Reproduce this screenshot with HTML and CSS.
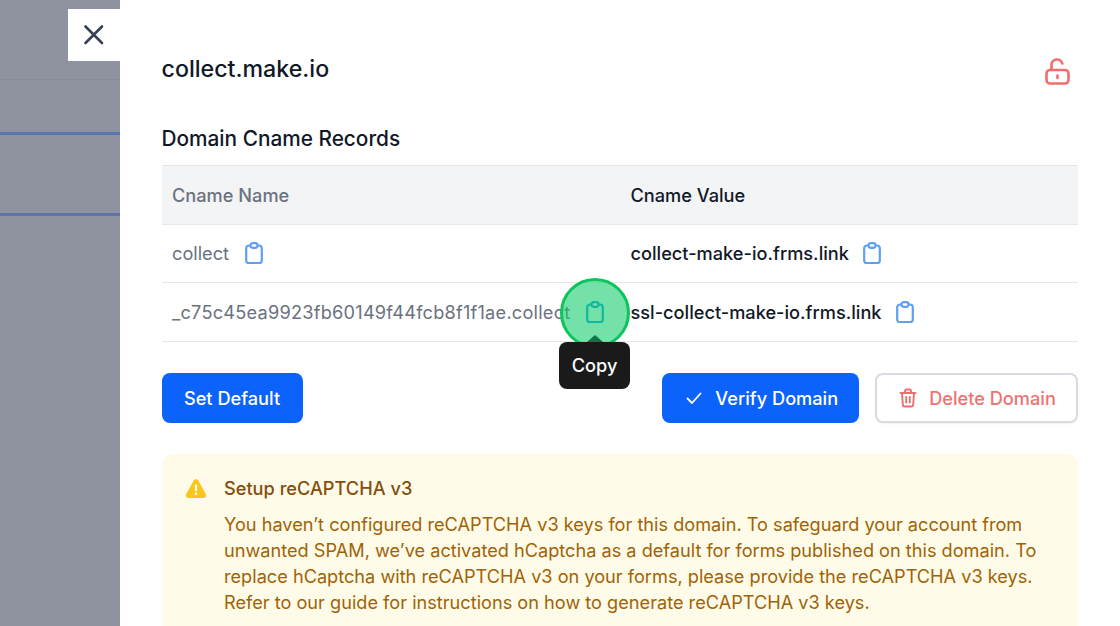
FILE: index.html
```html
<!DOCTYPE html>
<html lang="en">
<head>
<meta charset="utf-8">
<title>collect.make.io</title>
<link rel="stylesheet" href="styles.css">
</head>
<body>
<div class="app">
  <aside class="backdrop">
    <div class="line line-faint"></div>
    <div class="line line-a"></div>
    <div class="line line-b"></div>
    <button class="close" aria-label="Close">
      <svg width="26" height="26" viewBox="0 0 26 26" fill="none" stroke="#374151" stroke-width="2.6" stroke-linecap="round"><path d="M4.5 4.5 21 21M21 4.5 4.5 21"/></svg>
    </button>
  </aside>
  <main class="panel">
    <header class="head">
      <h1 class="title">collect.make.io</h1>
      <svg class="lock" width="25" height="27" viewBox="0 0 25 27" fill="none" stroke="#f26d6d" stroke-width="2.600" stroke-linecap="round" stroke-linejoin="round"><rect x="1.500" y="12" width="22" height="13.500" rx="3.500"/><path d="M6.500 12V7a5.500 5.500 0 0 1 10.800-1.500"/><path d="M12.500 17.500v2.500"/></svg>
    </header>
    <h2 class="subtitle">Domain Cname Records</h2>
    <div class="table">
      <div class="row row-head">
        <div class="cell cell-name muted">Cname Name</div>
        <div class="cell cell-value">Cname Value</div>
      </div>
      <div class="row">
        <div class="cell cell-name muted">collect
          <svg class="clip" viewBox="0 0 18 22" fill="none" stroke="#5ea1f2" stroke-width="2.200" stroke-linejoin="round"><path d="M5.500 3.500H4A2.800 2.800 0 0 0 1.200 6.300v12.500A2.200 2.200 0 0 0 3.400 21h11.200a2.200 2.200 0 0 0 2.200-2.200V6.300A2.800 2.800 0 0 0 14 3.500h-1.500"/><rect x="5.500" y="1.200" width="7" height="4.600" rx="2.200"/></svg>
        </div>
        <div class="cell cell-value">collect-make-io.frms.link
          <svg class="clip" viewBox="0 0 18 22" fill="none" stroke="#5ea1f2" stroke-width="2.200" stroke-linejoin="round"><path d="M5.500 3.500H4A2.800 2.800 0 0 0 1.200 6.300v12.500A2.200 2.200 0 0 0 3.400 21h11.200a2.200 2.200 0 0 0 2.200-2.200V6.300A2.800 2.800 0 0 0 14 3.500h-1.500"/><rect x="5.500" y="1.200" width="7" height="4.600" rx="2.200"/></svg>
        </div>
      </div>
      <div class="row">
        <div class="cell cell-name muted"><span class="token">_c75c45ea9923fb60149f44fcb8f1f1ae.collect</span>
          <svg class="clip clip-hot" viewBox="0 0 18 22" fill="none" stroke="#5ea1f2" stroke-width="2.200" stroke-linejoin="round"><path d="M5.500 3.500H4A2.800 2.800 0 0 0 1.200 6.300v12.500A2.200 2.200 0 0 0 3.400 21h11.200a2.200 2.200 0 0 0 2.200-2.200V6.300A2.800 2.800 0 0 0 14 3.500h-1.500"/><rect x="5.500" y="1.200" width="7" height="4.600" rx="2.200"/></svg>
        </div>
        <div class="cell cell-value">ssl-collect-make-io.frms.link
          <svg class="clip" viewBox="0 0 18 22" fill="none" stroke="#5ea1f2" stroke-width="2.200" stroke-linejoin="round"><path d="M5.500 3.500H4A2.800 2.800 0 0 0 1.200 6.300v12.500A2.200 2.200 0 0 0 3.400 21h11.200a2.200 2.200 0 0 0 2.200-2.200V6.300A2.800 2.800 0 0 0 14 3.500h-1.500"/><rect x="5.500" y="1.200" width="7" height="4.600" rx="2.200"/></svg>
        </div>
      </div>
    </div>
    <div class="actions">
      <button class="btn btn-primary btn-default">Set Default</button>
      <div class="actions-right">
        <button class="btn btn-primary btn-verify">
          <svg width="18" height="18" viewBox="0 0 18 18" fill="none" stroke="#fff" stroke-width="1.800" stroke-linecap="round" stroke-linejoin="round"><path d="M2.500 9.500 7 14 15.500 4.500"/></svg>
          Verify Domain
        </button>
        <button class="btn btn-outline">
          <svg width="18" height="20" viewBox="0 0 18 20" fill="none" stroke="#ee6f6f" stroke-width="1.900" stroke-linecap="round" stroke-linejoin="round"><path d="M1.500 5h15M6 5V3a1.500 1.500 0 0 1 1.500-1.500h3A1.500 1.500 0 0 1 12 3v2M3 5l.800 11.500A2 2 0 0 0 5.800 18.500h6.400a2 2 0 0 0 2-2L15 5M7.200 9v5.500M10.800 9v5.500"/></svg>
          Delete Domain
        </button>
      </div>
    </div>
    <section class="notice">
      <svg class="warn" width="24" height="24" viewBox="0 0 24 24"><path fill="#fbc61a" d="M9.700 3.600c1-1.800 3.600-1.800 4.600 0l7.500 13.500c1 1.800-.3 3.900-2.300 3.900H4.500c-2 0-3.300-2.100-2.300-3.900z"/><path fill="#fff" d="M10.900 7.500h2.200v6.500h-2.200zM10.800 15.500h2.400v2.400h-2.400z"/></svg>
      <div class="notice-body">
        <h3 class="notice-title">Setup reCAPTCHA v3</h3>
        <p class="notice-text">You haven’t configured reCAPTCHA v3 keys for this domain. To safeguard your account from unwanted SPAM, we’ve activated hCaptcha as a default for forms published on this domain. To replace hCaptcha with reCAPTCHA v3 on your forms, please provide the reCAPTCHA v3 keys. Refer to our guide for instructions on how to generate reCAPTCHA v3 keys.</p>
      </div>
    </section>
  </main>
  <div class="highlight"></div>
  <div class="tooltip">Copy</div>
</div>
</body>
</html>
```

FILE: styles.css
```css
* { box-sizing: border-box; }
html, body { margin: 0; height: 100%; overflow: hidden; }
body { font-family: Inter, "Liberation Sans", sans-serif; color: #111827; background: #fff; }
.app { position: relative; display: flex; width: 1120px; height: 626px; overflow: hidden; }

.backdrop { position: relative; flex: 0 0 120px; background: #8f939f; }
.line { position: absolute; left: 0; right: 0; }
.line-faint { top: 79px; height: 1px; background: #888c98; }
.line-a { top: 132px; height: 3px; background: #5a76ac; }
.line-b { top: 213px; height: 3px; background: #5a76ac; }
.close { position: absolute; top: 9px; left: 68px; width: 52px; height: 52px; border: 0; padding: 0; background: #fff; display: flex; align-items: center; justify-content: center; }

.panel { flex: 1; padding: 0 42px 0 41.500px; background: #fff; min-width: 0; }
.head { display: flex; justify-content: space-between; align-items: center; height: 46px; margin-top: 46px; }
.title { margin: 0; font-size: 23.200px; font-weight: 450; line-height: 46px; }
.lock { margin-right: 8px; margin-top: 5px; }
.subtitle { margin: 32px 0 0; font-size: 20.800px; font-weight: 450; line-height: 30px; height: 31px; }

.table { margin-top: 10px; border-top: 1px solid #e5e7eb; }
.row { display: flex; height: 58.670px; align-items: center; border-bottom: 1px solid #e5e7eb; font-size: 18.200px; }
.row-head { background: #f3f4f6; }
.cell { display: flex; align-items: center; white-space: nowrap; }
.cell-name { flex: 0 0 469px; padding-left: 10.500px; }
.cell-name .clip { margin-left: 15.500px; }
.cell-value { flex: 1; color: #111827; font-weight: 450; }
.muted { color: #6b7280; font-weight: 400; }
.row-head .cell-name { font-weight: 450; }
.token { letter-spacing: .22px; }
.clip { width: 18px; height: 22px; margin-left: 14px; flex: none; }
.clip-hot { stroke: #1199ee; }

.actions { display: flex; justify-content: space-between; margin-top: 31px; }
.actions-right { display: flex; gap: 16px; }
.btn { height: 50px; border-radius: 8px; font: 450 18.200px Inter, "Liberation Sans", sans-serif; display: flex; align-items: center; justify-content: center; padding: 0; }
.btn-primary { background: #0b63fb; color: #fff; border: 0; }
.btn-default { width: 141px; }
.btn-verify { width: 197.500px; gap: 12px; padding-left: 3px; }
.btn-outline { width: 203px; gap: 12px; background: #fff; color: #ee7272; border: 2px solid #d9dbe0; box-shadow: 0 1px 2px rgba(0,0,0,.06); padding-left: 2px; }

.notice { display: flex; margin-top: 31px; height: 200px; padding: 22px 20px 0 22px; background: #fefce8; border-radius: 10px; gap: 16.500px; }
.warn { flex: none; margin-top: 1px; }
.notice-title { margin: 0; font-size: 18.200px; font-weight: 450; line-height: 24px; color: #854d0e; }
.notice-text { margin: 11px 0 0; font-size: 18.160px; line-height: 26px; color: #a16207; }

.highlight { position: absolute; left: 560px; top: 278px; width: 70px; height: 70px; border-radius: 50%; border: 3px solid #0cc45c; background: rgba(15, 205, 105, .58); }
.tooltip { position: absolute; left: 559px; top: 342px; width: 71px; height: 47px; background: #1a1a1a; border-radius: 8px; color: #fff; font-size: 18.200px; font-weight: 450; display: flex; align-items: center; justify-content: center; padding-bottom: 1px; }
.tooltip::before { content: ""; position: absolute; left: 28px; top: -7px; border-left: 8px solid transparent; border-right: 8px solid transparent; border-bottom: 7px solid #1a6f45; }
```
